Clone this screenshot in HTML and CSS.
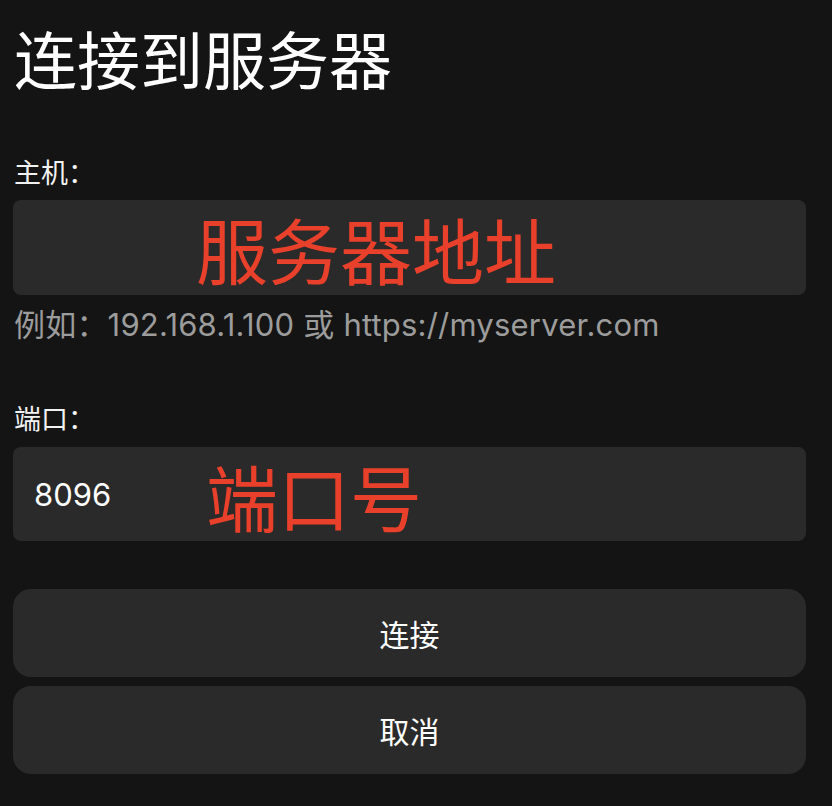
FILE: index.html
```html
<!DOCTYPE html>
<html>
<head>
<meta charset="utf-8">
<title>连接到服务器</title>
<link rel="stylesheet" href="styles.css">
</head>
<body>
<div class="page">
  <h1 class="title">连接到服务器</h1>

  <div class="field">
    <label class="label" for="host">主机：</label>
    <div class="input-box">
      <input type="text" id="host" class="input" value="">
      <span class="note note-host">服务器地址</span>
    </div>
    <div class="hint">例如：192.168.1.100 或 https://myserver.com</div>
  </div>

  <div class="field field-port">
    <label class="label" for="port">端口：</label>
    <div class="input-box">
      <input type="text" id="port" class="input" value="8096">
      <span class="note note-port">端口号</span>
    </div>
  </div>

  <div class="actions">
    <button class="button">连接</button>
    <button class="button">取消</button>
  </div>
</div>
</body>
</html>
```

FILE: styles.css
```css
body {
  margin: 0;
  padding: 0;
  background-color: #141414;
  color: #f2f2f2;
  font-family: Inter, "Noto Sans CJK SC", sans-serif;
}

.page {
  padding: 24px 26px 0 13px;
}

.title {
  margin: 0;
  padding-left: 1px;
  font-size: 63px;
  font-weight: 400;
  line-height: 74px;
  color: #ffffff;
}

.field {
  margin-top: 59px;
}

.field-port {
  margin-top: 60px;
}

.label {
  display: block;
  padding-left: 1px;
  font-size: 27px;
  line-height: 34px;
}

.input-box {
  position: relative;
  display: flex;
  align-items: center;
  height: 95px;
  margin-top: 9px;
  background-color: #2a2a2a;
  border-radius: 8px;
}

.field-port .input-box {
  height: 94px;
  margin-top: 10px;
}

.input {
  flex: 1;
  padding: 0 0 0 21px;
  border: none;
  outline: none;
  background: transparent;
  color: #ffffff;
  font-family: inherit;
  font-size: 31px;
}

/* red annotations drawn over the fields */
.note {
  position: absolute;
  top: 0;
  bottom: 0;
  display: flex;
  align-items: center;
  font-size: 72px;
  color: #e8402a;
  pointer-events: none;
}

.note-host {
  left: 183px;
}

.note-port {
  left: 193px;
}

.hint {
  margin-top: 12px;
  padding-left: 1px;
  font-size: 31px;
  line-height: 36px;
  letter-spacing: 0.2px;
  color: #9c9c9c;
}

.actions {
  display: flex;
  flex-direction: column;
  gap: 9px;
  margin-top: 48px;
}

.button {
  height: 88px;
  border: none;
  border-radius: 18px;
  background-color: #2a2a2a;
  color: #ffffff;
  font-family: inherit;
  font-size: 30px;
  cursor: pointer;
}
```
